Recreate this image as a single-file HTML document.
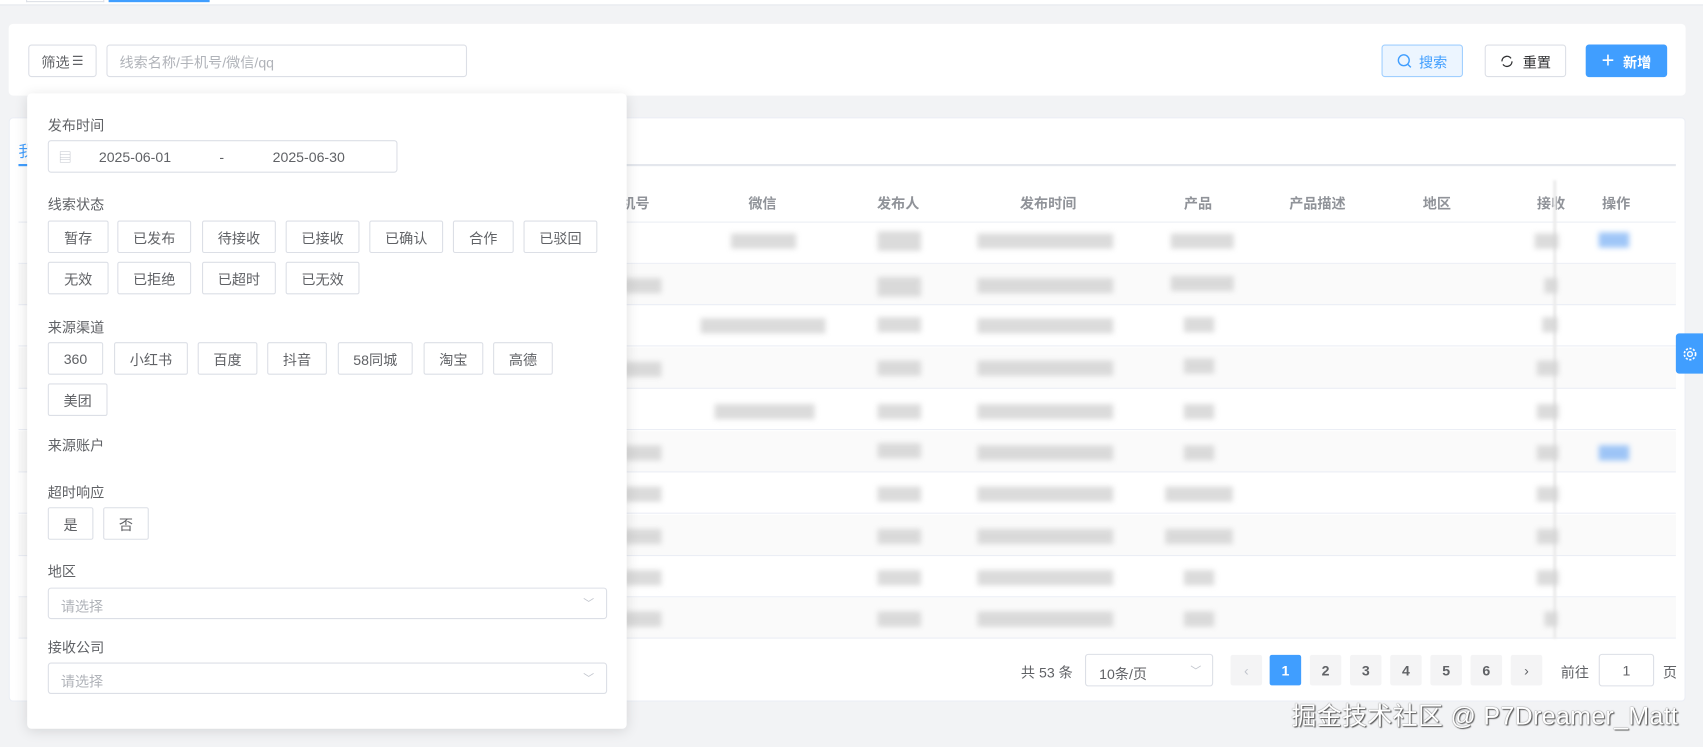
<!DOCTYPE html>
<html><head><meta charset="utf-8"><style>
*{box-sizing:border-box;margin:0;padding:0}
html,body{width:1703px;height:747px;overflow:hidden;background:#f2f3f5}
body{font-family:"Liberation Sans","Noto Sans CJK SC",sans-serif;font-size:13px;color:#606266}
#w{position:absolute;left:0;top:0;width:1568px;height:688px;transform:scale(1.08610);transform-origin:0 0;background:#f2f3f5}
.a{position:absolute}
.card{position:absolute;background:#fff;border-radius:4px}
.btn{position:absolute;height:30px;border:1px solid #dcdfe6;border-radius:3px;background:#fff;display:flex;align-items:center;justify-content:center;font-size:13px;color:#606266}
.th{position:absolute;top:177px;font-size:13px;color:#909399;font-weight:bold;transform:translateX(-50%)}
.row{position:absolute;left:17px;width:1526px;height:38px;border-bottom:1px solid #ebeef5}
.bl{position:absolute;height:14px;background:#cfcfcf;filter:blur(2.5px);opacity:.75}
.lab{position:absolute;left:44px;font-size:13px;color:#606266}
.tag{position:absolute;height:30px;border:1px solid #dcdfe6;border-radius:2px;display:flex;align-items:center;justify-content:center;color:#606266;font-size:13px;background:#fff}
.pg{position:absolute;top:603px;width:29px;height:28px;background:#f4f4f5;border-radius:2px;display:flex;align-items:center;justify-content:center;color:#606266;font-size:13px;font-weight:bold}
</style></head><body><div id="w">
<div class="a" style="left:0;top:0;width:1568px;height:5px;background:#fff;border-bottom:1px solid #e4e7ed"></div>
<div class="a" style="left:24px;top:0;width:72px;height:2px;border:1px solid #dcdfe6;border-top:0"></div>
<div class="a" style="left:100px;top:0;width:93px;height:2px;background:#409eff"></div>

<div class="card" style="left:8px;top:22px;width:1544px;height:66px"></div>
<div class="btn" style="left:26px;top:41px;width:63px">筛选<span style="font-size:12px;margin-left:2px">☰</span></div>
<div class="btn" style="left:98px;top:41px;width:332px;justify-content:flex-start;padding-left:11px;color:#b0b3b9">线索名称/手机号/微信/qq</div>
<div class="btn" style="left:1272px;top:41px;width:75px;background:#ecf5ff;border-color:#a0cfff;color:#409eff"><svg width="14" height="14" viewBox="0 0 14 14" style="margin-right:6px"><circle cx="6.5" cy="6.5" r="5" fill="none" stroke="#409eff" stroke-width="1.3"/><path d="M10 10l3 3" stroke="#409eff" stroke-width="1.3"/></svg>搜索</div>
<div class="btn" style="left:1367px;top:41px;width:75px;color:#303133"><svg width="13" height="13" viewBox="0 0 14 14" style="margin-right:8px"><path d="M2 7a5 5 0 0 1 9-3M12 7a5 5 0 0 1-9 3" fill="none" stroke="#303133" stroke-width="1.3"/></svg>重置</div>
<div class="btn" style="left:1460px;top:41px;width:75px;background:#409eff;border-color:#409eff;color:#fff;font-weight:bold"><span style="font-size:20px;font-weight:300;margin-right:8px;line-height:1">+</span>新增</div>

<div class="card" style="left:8px;top:108px;width:1544px;height:538px;border:1px solid #ebeef5"></div>
<div class="a" style="left:17px;top:129px;color:#409eff;font-size:14px">我</div>
<div class="a" style="left:17px;top:151px;width:1526px;height:2px;background:#e4e7ed"></div>
<div class="a" style="left:17px;top:151px;width:10px;height:2px;background:#409eff"></div>
<div class="a" style="left:17px;top:166px;width:1526px;height:39px;border-bottom:1px solid #ebeef5"></div>
<div class="th" style="left:585px">机号</div>
<div class="th" style="left:702px">微信</div>
<div class="th" style="left:827px">发布人</div>
<div class="th" style="left:965px">发布时间</div>
<div class="th" style="left:1103px">产品</div>
<div class="th" style="left:1213px">产品描述</div>
<div class="th" style="left:1323px">地区</div>
<div class="th" style="left:1428px">接收</div>
<div class="th" style="left:1488px">操作</div>

<div class="row" style="top:205px"></div>
<div class="row" style="top:243px;background:#fafafa"></div>
<div class="row" style="top:281px"></div>
<div class="row" style="top:320px;background:#fafafa"></div>
<div class="row" style="top:358px"></div>
<div class="row" style="top:397px;background:#fafafa"></div>
<div class="row" style="top:435px"></div>
<div class="row" style="top:474px;background:#fafafa"></div>
<div class="row" style="top:512px"></div>
<div class="row" style="top:550px;background:#fafafa"></div>
<div class="a" style="left:1430px;top:166px;width:3px;height:422px;background:#ececec;filter:blur(1px)"></div>

<div class="bl" style="left:673px;top:215px;width:60px"></div>
<div class="bl" style="left:808px;top:213px;width:40px;height:18px"></div>
<div class="bl" style="left:900px;top:215px;width:125px"></div>
<div class="bl" style="left:1078px;top:215px;width:58px"></div>
<div class="bl" style="left:1413px;top:215px;width:22px"></div>
<div class="bl" style="left:1472px;top:214px;width:28px;background:#7fb3f5"></div>
<div class="bl" style="left:575px;top:256px;width:34px"></div>
<div class="bl" style="left:808px;top:255px;width:40px;height:18px"></div>
<div class="bl" style="left:900px;top:256px;width:125px"></div>
<div class="bl" style="left:1078px;top:254px;width:58px"></div>
<div class="bl" style="left:1422px;top:256px;width:12px"></div>
<div class="bl" style="left:645px;top:293px;width:115px"></div>
<div class="bl" style="left:808px;top:292px;width:40px"></div>
<div class="bl" style="left:900px;top:293px;width:125px"></div>
<div class="bl" style="left:1090px;top:292px;width:28px"></div>
<div class="bl" style="left:1420px;top:292px;width:14px"></div>
<div class="bl" style="left:575px;top:333px;width:34px"></div>
<div class="bl" style="left:808px;top:332px;width:40px"></div>
<div class="bl" style="left:900px;top:332px;width:125px"></div>
<div class="bl" style="left:1090px;top:330px;width:28px"></div>
<div class="bl" style="left:1415px;top:332px;width:20px"></div>
<div class="bl" style="left:658px;top:372px;width:92px"></div>
<div class="bl" style="left:808px;top:372px;width:40px"></div>
<div class="bl" style="left:900px;top:372px;width:125px"></div>
<div class="bl" style="left:1090px;top:372px;width:28px"></div>
<div class="bl" style="left:1415px;top:372px;width:20px"></div>
<div class="bl" style="left:575px;top:410px;width:34px"></div>
<div class="bl" style="left:808px;top:408px;width:40px"></div>
<div class="bl" style="left:900px;top:410px;width:125px"></div>
<div class="bl" style="left:1090px;top:410px;width:28px"></div>
<div class="bl" style="left:1415px;top:410px;width:20px"></div>
<div class="bl" style="left:1472px;top:410px;width:28px;background:#7fb3f5"></div>
<div class="bl" style="left:575px;top:448px;width:34px"></div>
<div class="bl" style="left:808px;top:448px;width:40px"></div>
<div class="bl" style="left:900px;top:448px;width:125px"></div>
<div class="bl" style="left:1073px;top:448px;width:62px"></div>
<div class="bl" style="left:1415px;top:448px;width:20px"></div>
<div class="bl" style="left:575px;top:487px;width:34px"></div>
<div class="bl" style="left:808px;top:487px;width:40px"></div>
<div class="bl" style="left:900px;top:487px;width:125px"></div>
<div class="bl" style="left:1073px;top:487px;width:62px"></div>
<div class="bl" style="left:1415px;top:487px;width:20px"></div>
<div class="bl" style="left:575px;top:525px;width:34px"></div>
<div class="bl" style="left:808px;top:525px;width:40px"></div>
<div class="bl" style="left:900px;top:525px;width:125px"></div>
<div class="bl" style="left:1090px;top:525px;width:28px"></div>
<div class="bl" style="left:1415px;top:525px;width:20px"></div>
<div class="bl" style="left:575px;top:563px;width:34px"></div>
<div class="bl" style="left:808px;top:563px;width:40px"></div>
<div class="bl" style="left:900px;top:563px;width:125px"></div>
<div class="bl" style="left:1090px;top:563px;width:28px"></div>
<div class="bl" style="left:1422px;top:563px;width:12px"></div>

<div class="a" style="left:940px;top:609px;font-size:13px">共 53 条</div>
<div class="a" style="left:999px;top:602px;width:118px;height:30px;border:1px solid #dcdfe6;border-radius:3px;padding:7px 0 0 12px">10条/页<span style="position:absolute;right:10px;top:6px;color:#c0c4cc;font-size:10px">﹀</span></div>
<div class="pg" style="left:1133px;color:#c0c4cc;font-weight:normal">‹</div>
<div class="pg" style="left:1169px;background:#409eff;color:#fff">1</div>
<div class="pg" style="left:1206px">2</div>
<div class="pg" style="left:1243px">3</div>
<div class="pg" style="left:1280px">4</div>
<div class="pg" style="left:1317px">5</div>
<div class="pg" style="left:1354px">6</div>
<div class="pg" style="left:1391px;font-weight:normal">›</div>
<div class="a" style="left:1437px;top:609px">前往</div>
<div class="a" style="left:1472px;top:602px;width:51px;height:30px;border:1px solid #dcdfe6;border-radius:3px;text-align:center;padding-top:7px">1</div>
<div class="a" style="left:1531px;top:609px">页</div>

<div class="a" style="left:1189px;top:640px;font-size:23px;letter-spacing:0.3px;color:#fff;text-shadow:0 0 1px #555,1px 1px 1px #555">掘金技术社区 @ P7Dreamer_Matt</div>

<div class="a" style="left:1543px;top:307px;width:25px;height:37px;background:#409eff;border-radius:3px 0 0 3px;display:flex;align-items:center;justify-content:center"><svg width="14" height="14" viewBox="0 0 14 14"><circle cx="7" cy="7" r="2.2" fill="none" stroke="#fff" stroke-width="1.2"/><circle cx="7" cy="7" r="5.2" fill="none" stroke="#fff" stroke-width="1.5" stroke-dasharray="2 1.4"/></svg></div>

<div class="a" style="left:25px;top:86px;width:552px;height:585px;background:#fff;border-radius:4px;box-shadow:0 2px 12px rgba(0,0,0,.12)"></div>
<div class="lab" style="top:105px">发布时间</div>
<div class="a" style="left:44px;top:129px;width:322px;height:30px;border:1px solid #dcdfe6;border-radius:3px;color:#606266"><span style="position:absolute;left:9px;top:6px;color:#c0c4cc;font-size:12px">▤</span><span style="position:absolute;left:46px;top:7px">2025-06-01</span><span style="position:absolute;left:157px;top:7px">-</span><span style="position:absolute;left:206px;top:7px">2025-06-30</span></div>
<div class="lab" style="top:178px">线索状态</div>
<div class="tag" style="left:44px;top:203px;width:56px">暂存</div>
<div class="tag" style="left:108px;top:203px;width:68px">已发布</div>
<div class="tag" style="left:186px;top:203px;width:68px">待接收</div>
<div class="tag" style="left:263px;top:203px;width:68px">已接收</div>
<div class="tag" style="left:340px;top:203px;width:68px">已确认</div>
<div class="tag" style="left:417px;top:203px;width:56px">合作</div>
<div class="tag" style="left:482px;top:203px;width:68px">已驳回</div>
<div class="tag" style="left:44px;top:241px;width:56px">无效</div>
<div class="tag" style="left:108px;top:241px;width:68px">已拒绝</div>
<div class="tag" style="left:186px;top:241px;width:68px">已超时</div>
<div class="tag" style="left:263px;top:241px;width:68px">已无效</div>
<div class="lab" style="top:291px">来源渠道</div>
<div class="tag" style="left:44px;top:315px;width:51px">360</div>
<div class="tag" style="left:105px;top:315px;width:68px">小红书</div>
<div class="tag" style="left:182px;top:315px;width:55px">百度</div>
<div class="tag" style="left:246px;top:315px;width:55px">抖音</div>
<div class="tag" style="left:311px;top:315px;width:69px">58同城</div>
<div class="tag" style="left:390px;top:315px;width:55px">淘宝</div>
<div class="tag" style="left:454px;top:315px;width:55px">高德</div>
<div class="tag" style="left:44px;top:353px;width:55px">美团</div>
<div class="lab" style="top:400px">来源账户</div>
<div class="lab" style="top:443px">超时响应</div>
<div class="tag" style="left:44px;top:467px;width:42px">是</div>
<div class="tag" style="left:95px;top:467px;width:42px">否</div>
<div class="lab" style="top:516px">地区</div>
<div class="a" style="left:44px;top:541px;width:515px;height:29px;border:1px solid #dcdfe6;border-radius:3px;padding:6px 0 0 11px;color:#b0b3b9">请选择<span style="position:absolute;right:11px;top:5px;font-size:10px;color:#c0c4cc">﹀</span></div>
<div class="lab" style="top:586px">接收公司</div>
<div class="a" style="left:44px;top:610px;width:515px;height:29px;border:1px solid #dcdfe6;border-radius:3px;padding:6px 0 0 11px;color:#b0b3b9">请选择<span style="position:absolute;right:11px;top:5px;font-size:10px;color:#c0c4cc">﹀</span></div>
</div></body></html>
